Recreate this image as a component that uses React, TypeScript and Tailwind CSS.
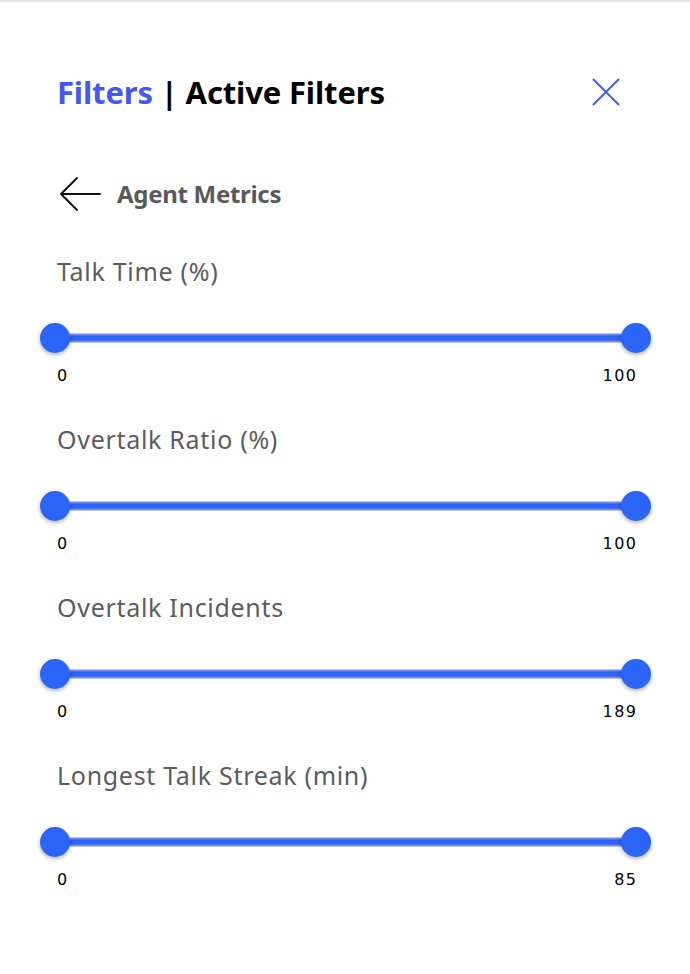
import React from "react";

type Metric = { label: string; min: number; max: number };

const metrics: Metric[] = [
  { label: "Talk Time (%)", min: 0, max: 100 },
  { label: "Overtalk Ratio (%)", min: 0, max: 100 },
  { label: "Overtalk Incidents", min: 0, max: 189 },
  { label: "Longest Talk Streak (min)", min: 0, max: 85 },
];

function RangeSlider({ min, max }: { min: number; max: number }) {
  return (
    <div>
      <div className="relative h-[30px]">
        <div className="absolute inset-x-0 top-1/2 -translate-y-1/2 h-[9px] bg-[#7289ea] flex items-center">
          <div className="h-[5px] w-full bg-[#2b63f5]" />
        </div>
        <div className="absolute left-[-15px] top-0 w-[30px] h-[30px] rounded-full bg-[#2b65f5] shadow-[0_2px_4px_rgba(0,0,0,0.3)]" />
        <div className="absolute right-[-15px] top-0 w-[30px] h-[30px] rounded-full bg-[#2b65f5] shadow-[0_2px_4px_rgba(0,0,0,0.3)]" />
      </div>
      <div
        className="mt-[13px] h-[20px] flex justify-between items-center text-[16px] tracking-[1.5px] text-black"
        style={{ fontFamily: '"DejaVu Sans", sans-serif' }}
      >
        <span className="pl-[2px]">{min}</span>
        <span className="-mr-[1.5px]">{max}</span>
      </div>
    </div>
  );
}

export default function App() {
  return (
    <div
      className="w-[690px] h-[974px] bg-white border-t-2 border-[#e6e6e6] overflow-hidden"
      style={{ fontFamily: '"Noto Sans", sans-serif' }}
    >
      <div className="ml-[55px] w-[581px] pt-[68px]">
        <div className="h-[44px] flex items-center justify-between">
          <h1 className="pl-[2px] text-[31px] font-bold tracking-[-0.15px] leading-none text-black">
            <span className="text-[#4258f0]">Filters</span> | Active Filters
          </h1>
          <svg
            width="28"
            height="28"
            viewBox="0 0 28 28"
            className="mr-[16px]"
            fill="none"
            stroke="#4a5cf0"
            strokeWidth="2"
          >
            <path d="M1 1 L27 27 M27 1 L1 27" />
          </svg>
        </div>

        <div className="mt-[60px] h-[40px] flex items-center">
          <svg
            width="42"
            height="36"
            viewBox="0 0 42 36"
            fill="none"
            stroke="#111"
            strokeWidth="2"
            strokeLinecap="round"
            strokeLinejoin="round"
            className="ml-[4px]"
          >
            <path d="M41 18 H2 M18 2 L2 18 L18 34" />
          </svg>
          <span className="ml-[16px] text-[24px] font-bold text-[#595959] tracking-[-0.3px]">
            Agent Metrics
          </span>
        </div>

        <div className="mt-[42px] flex flex-col gap-[38px]">
          {metrics.map((m) => (
            <div key={m.label}>
              <div className="h-[32px] flex items-center pl-[2px] text-[25px] text-[#5c5c5c] tracking-[0.7px]">
                {m.label}
              </div>
              <div className="mt-[35px]">
                <RangeSlider min={m.min} max={m.max} />
              </div>
            </div>
          ))}
        </div>
      </div>
    </div>
  );
}
